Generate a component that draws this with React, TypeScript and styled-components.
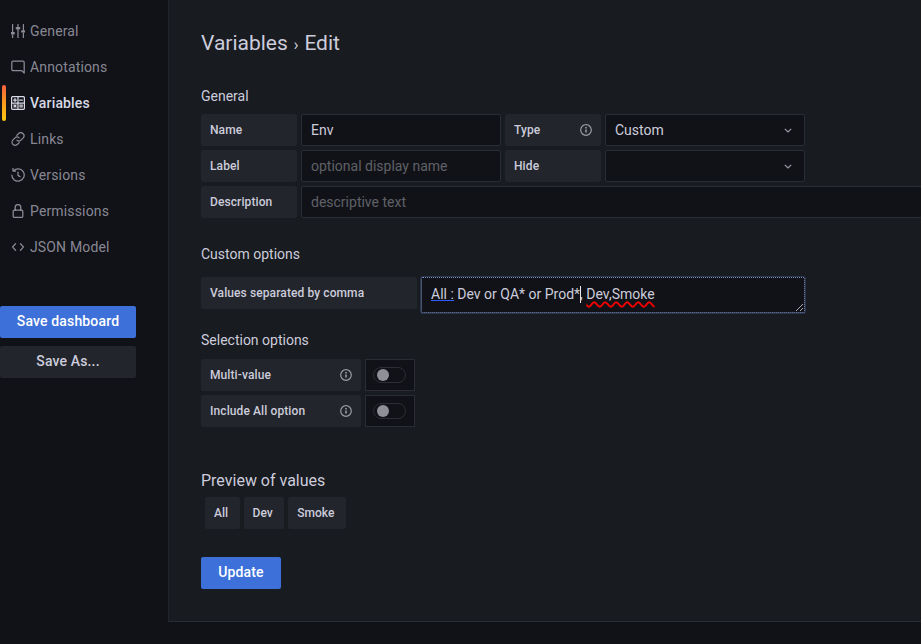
import * as React from "react";
import styled, { createGlobalStyle } from "styled-components";

const GlobalStyle = createGlobalStyle`
  html, body {
    margin: 0;
    height: 100%;
    overflow: hidden;
    background: #111217;
  }
  * {
    box-sizing: border-box;
  }
`;

const Page = styled.div`
  display: flex;
  align-items: flex-start;
  width: 921px;
  height: 644px;
  overflow: hidden;
  background: #111217;
  color: #ccccdc;
  font-family: Roboto, "Liberation Sans", sans-serif;
`;

const Sidebar = styled.nav`
  flex: 0 0 168px;
  display: flex;
  flex-direction: column;
  padding-top: 13px;
`;

const NavItem = styled.a<{ $active?: boolean }>`
  position: relative;
  display: flex;
  align-items: center;
  gap: 5px;
  height: 36px;
  padding-left: 11px;
  font-size: 14px;
  letter-spacing: 0.15px;
  font-weight: ${(p) => (p.$active ? 500 : 400)};
  color: ${(p) => (p.$active ? "#d8d9e6" : "rgba(204, 204, 220, 0.65)")};

  &::before {
    content: "";
    display: ${(p) => (p.$active ? "block" : "none")};
    position: absolute;
    left: 2px;
    top: 0;
    bottom: 0;
    width: 4px;
    border-radius: 2px;
    background: linear-gradient(180deg, #f55f3e 0%, #f99b1c 50%, #fbc913 100%);
  }
`;

const NavIcon = styled.svg`
  flex: 0 0 14px;
  width: 14px;
  height: 14px;
  fill: none;
  stroke: currentColor;
  stroke-width: 1.25;
  stroke-linecap: round;
  stroke-linejoin: round;
`;

const SaveGroup = styled.div`
  display: flex;
  flex-direction: column;
  gap: 8px;
  width: 136px;
  margin-top: 41px;
`;

const Button = styled.button<{ $variant?: "primary" | "secondary" }>`
  height: 32px;
  padding: 0 16px 2px;
  border: 0;
  border-radius: 2px;
  font-family: inherit;
  font-size: 14px;
  font-weight: 500;
  letter-spacing: 0.15px;
  background: ${(p) => (p.$variant === "secondary" ? "#22252b" : "#3d71d9")};
  color: ${(p) => (p.$variant === "secondary" ? "#ccccdc" : "#ffffff")};
`;

const Panel = styled.main`
  flex: 1;
  min-width: 0;
  height: 622px;
  padding: 31px 0 0 32px;
  overflow: hidden;
  background: #181b1f;
  border-left: 1px solid #22252b;
  border-bottom: 1px solid #2a2d33;
`;

const Title = styled.h1`
  height: 25px;
  margin: 0;
  font-size: 21px;
  line-height: 25px;
  font-weight: 400;
  color: #ccccdc;
`;

const Separator = styled.span`
  margin: 0 0.5px;
  font-size: 17px;
`;

const Heading = styled.h2<{ $top: number; $bottom: number; $large?: boolean }>`
  margin: ${(p) => p.$top}px 0 ${(p) => p.$bottom}px;
  font-size: ${(p) => (p.$large ? 16 : 14)}px;
  line-height: ${(p) => (p.$large ? 24 : 20)}px;
  font-weight: 400;
  color: #ccccdc;
`;

const Rows = styled.div`
  display: flex;
  flex-direction: column;
  gap: 4px;
`;

const Row = styled.div`
  display: flex;
  align-items: flex-start;
  gap: 4px;
`;

const Label = styled.div<{ $width: number }>`
  display: flex;
  align-items: center;
  justify-content: space-between;
  flex: 0 0 ${(p) => p.$width}px;
  height: 32px;
  padding: 0 9px;
  border-radius: 2px;
  background: #22252b;
  font-size: 12px;
  font-weight: 500;
  letter-spacing: 0.1px;
  color: #ccccdc;
`;

const Field = styled.div<{ $width: number; $muted?: boolean }>`
  display: flex;
  align-items: center;
  justify-content: space-between;
  flex: 0 0 ${(p) => p.$width}px;
  height: 32px;
  padding: 0 9px;
  border: 1px solid #2a2d33;
  border-radius: 2px;
  background: #111217;
  font-size: 14px;
  color: ${(p) => (p.$muted ? "#5f6167" : "#ccccdc")};
`;

const Info = styled.svg`
  flex: 0 0 12px;
  width: 12px;
  height: 12px;
  fill: none;
  stroke: #9a9ba5;
`;

const Chevron = styled.svg`
  width: 8px;
  height: 5px;
  margin-right: 3px;
  fill: none;
  stroke: #9a9ba5;
  stroke-width: 1.2;
`;

const TextBox = styled.div`
  position: relative;
  flex: 0 0 384px;
  height: 36px;
  padding: 0 9px;
  line-height: 33px;
  white-space: nowrap;
  border: 1px dotted #8496c4;
  border-radius: 2px;
  background: #111217;
  box-shadow: 0 0 0 1px #2a3552;
  font-size: 14px;
  color: #ccccdc;
`;

const Grammar = styled.span`
  background-image: linear-gradient(#2f5cff, #2f5cff), linear-gradient(#2f5cff, #2f5cff);
  background-repeat: no-repeat;
  background-size: 100% 1px;
  background-position: 0 14px, 0 16px;
`;

const Spelling = styled.span`
  text-decoration: underline wavy #f00000 1.6px;
  text-underline-offset: 2px;
  text-decoration-skip-ink: none;
`;

const Caret = styled.span`
  display: inline-block;
  width: 1px;
  height: 17px;
  margin-right: -1px;
  vertical-align: -4px;
  background: #e8e8f0;
`;

const Grip = styled.svg`
  position: absolute;
  right: 1px;
  bottom: 1px;
  width: 7px;
  height: 7px;
  stroke: #a8a9b2;
  stroke-width: 1;
`;

const SwitchBox = styled.div`
  display: flex;
  align-items: center;
  justify-content: center;
  flex: 0 0 50px;
  height: 32px;
  padding-right: 1px;
  border: 1px solid #2a2d33;
  background: #111217;
`;

const SwitchTrack = styled.div`
  display: flex;
  align-items: center;
  width: 33px;
  height: 16px;
  padding-left: 3px;
  border: 1px solid #2a2d33;
  border-radius: 8px;
`;

const SwitchKnob = styled.div`
  width: 12px;
  height: 12px;
  border-radius: 50%;
  background: #8f9097;
`;

const Chips = styled.div`
  display: flex;
  gap: 4px;
  padding-left: 4px;
`;

const Chip = styled.div`
  display: flex;
  align-items: center;
  height: 32px;
  padding: 0 11.5px 0 9px;
  border-radius: 2px;
  background: #22252b;
  font-size: 12px;
  font-weight: 500;
  color: #ccccdc;
`;

const UpdateButton = styled(Button)`
  display: block;
  width: 80px;
  margin-top: 28px;
  padding: 0 0 2px;
`;

const navItems: { label: string; icon: React.ReactNode }[] = [
  {
    label: "General",
    icon: (
      <>
        <path d="M1.6.6v7M1.6 11v2.4M7 .6v2M7 5.8v7.6M12.4.6v5.2M12.4 9v4.4" />
        <path d="M.4 9.2h2.4M5.8 4.2h2.4M11.2 7.4h2.4" strokeWidth="2.4" />
      </>
    ),
  },
  {
    label: "Annotations",
    icon: <path d="M2.2 1h9.6A1.4 1.4 0 0 1 13.2 2.4V13l-2.6-2.4H2.2A1.4 1.4 0 0 1 .8 9.2V2.4A1.4 1.4 0 0 1 2.2 1z" />,
  },
  {
    label: "Variables",
    icon: (
      <>
        <rect x="0.6" y="0.6" width="12.8" height="12.8" rx="1.2" />
        <path d="M7 .8v12.4M.8 7h12.4M2.6 4h2.8M4 2.6v2.8M8.6 4h2.8M8.8 9.2h2.6M8.8 10.8h2.6M3 9l2 2M5 9l-2 2" />
      </>
    ),
  },
  {
    label: "Links",
    icon: (
      <path d="M5.8 3.4l1.6-1.6a2.9 2.9 0 0 1 4.8 4.1L10 8.1a2.9 2.9 0 0 1-4.1 0M8.2 10.6l-1.6 1.6a2.9 2.9 0 0 1-4.8-4.1L4 5.9a2.9 2.9 0 0 1 4.1 0" />
    ),
  },
  {
    label: "Versions",
    icon: (
      <>
        <path d="M2.6 2.6A6.2 6.2 0 1 1 .8 7M2 .4v2.6h2.6" />
        <path d="M7 4v3.4l2 1.2" />
      </>
    ),
  },
  {
    label: "Permissions",
    icon: (
      <>
        <rect x="2.2" y="6" width="9.6" height="7.4" rx="1.2" />
        <path d="M4.2 6V3.4a2.8 2.8 0 0 1 5.6 0V6" />
      </>
    ),
  },
  {
    label: "JSON Model",
    icon: <path d="M4.6 3.6L1.6 7l3 3.4M9.4 3.6l3 3.4-3 3.4" />,
  },
];

const InfoIcon = () => (
  <Info viewBox="0 0 12 12">
    <circle cx="6" cy="6" r="5.3" strokeWidth="1.2" />
    <path d="M6 5.4v3" strokeWidth="1.6" />
    <path d="M6 3v1.4" strokeWidth="1.6" />
  </Info>
);

const ChevronIcon = () => (
  <Chevron viewBox="0 0 8 5">
    <path d="M.8.8L4 4l3.2-3.2" />
  </Chevron>
);

export default function App() {
  return (
    <Page>
      <GlobalStyle />
      <Sidebar>
        {navItems.map((item) => (
          <NavItem key={item.label} $active={item.label === "Variables"}>
            <NavIcon viewBox="0 0 14 14">{item.icon}</NavIcon>
            {item.label}
          </NavItem>
        ))}
        <SaveGroup>
          <Button>Save dashboard</Button>
          <Button $variant="secondary">Save As...</Button>
        </SaveGroup>
      </Sidebar>

      <Panel>
        <Title>
          Variables <Separator>›</Separator> Edit
        </Title>

        <Heading $top={30} $bottom={8}>General</Heading>
        <Rows>
          <Row>
            <Label $width={96}>Name</Label>
            <Field $width={200}>Env</Field>
            <Label $width={96}>
              Type
              <InfoIcon />
            </Label>
            <Field $width={200}>
              Custom
              <ChevronIcon />
            </Field>
          </Row>
          <Row>
            <Label $width={96}>Label</Label>
            <Field $width={200} $muted>optional display name</Field>
            <Label $width={96}>Hide</Label>
            <Field $width={200}>
              <span />
              <ChevronIcon />
            </Field>
          </Row>
          <Row>
            <Label $width={96}>Description</Label>
            <Field $width={700} $muted>descriptive text</Field>
          </Row>
        </Rows>

        <Heading $top={26} $bottom={13}>Custom options</Heading>
        <Row>
          <Label $width={216}>Values separated by comma</Label>
          <TextBox>
            <Grammar>All :</Grammar> Dev or QA* or Prod*<Caret />, <Spelling>Dev,Smoke</Spelling>
            <Grip viewBox="0 0 7 7">
              <path d="M0 7L7 0M4 7l3-3" />
            </Grip>
          </TextBox>
        </Row>

        <Heading $top={17} $bottom={9}>Selection options</Heading>
        <Rows>
          <Row>
            <Label $width={160}>
              Multi-value
              <InfoIcon />
            </Label>
            <SwitchBox>
              <SwitchTrack>
                <SwitchKnob />
              </SwitchTrack>
            </SwitchBox>
          </Row>
          <Row>
            <Label $width={160}>
              Include All option
              <InfoIcon />
            </Label>
            <SwitchBox>
              <SwitchTrack>
                <SwitchKnob />
              </SwitchTrack>
            </SwitchBox>
          </Row>
        </Rows>

        <Heading $top={42} $bottom={4} $large>Preview of values</Heading>
        <Chips>
          <Chip>All</Chip>
          <Chip>Dev</Chip>
          <Chip>Smoke</Chip>
        </Chips>

        <UpdateButton>Update</UpdateButton>
      </Panel>
    </Page>
  );
}
